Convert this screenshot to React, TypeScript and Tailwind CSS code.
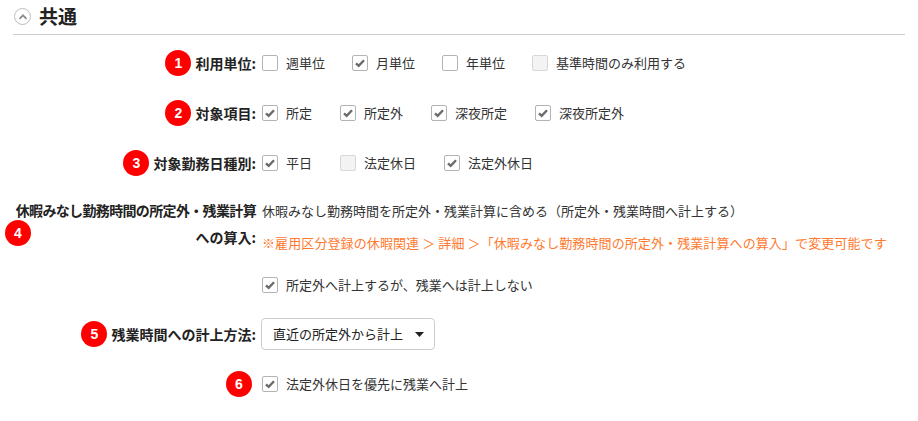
import React from "react";

const FONT = { fontFamily: '"Noto Sans CJK JP", "Noto Sans", sans-serif' };

function Badge({ n, className = "" }: { n: number; className?: string }) {
  return (
    <span
      className={`flex h-[26px] w-[26px] shrink-0 items-center justify-center rounded-full bg-[#f00] text-[14px] font-bold leading-none text-white ${className}`}
      style={{ fontFamily: '"Liberation Sans", Arial, sans-serif' }}
    >
      {n}
    </span>
  );
}

function Check({ checked, disabled }: { checked?: boolean; disabled?: boolean }) {
  return (
    <span
      className={`flex h-[16px] w-[16px] shrink-0 items-center justify-center rounded-[2px] border ${
        disabled ? "border-[#d8d8d8] bg-[#f3f3f3]" : "border-[#b3b3b3] bg-white"
      }`}
    >
      {checked && (
        <svg width="12" height="12" viewBox="0 0 12 12">
          <path d="M2 6.3 L4.7 8.9 L10 3.2" fill="none" stroke="#6b6b6b" strokeWidth="2.4" />
        </svg>
      )}
    </span>
  );
}

function Item({ label, checked, disabled }: { label: string; checked?: boolean; disabled?: boolean }) {
  return (
    <label className="flex items-center gap-[8px]">
      <Check checked={checked} disabled={disabled} />
      <span>{label}</span>
    </label>
  );
}

function Label({ n, text }: { n: number; text: string }) {
  return (
    <div className="flex items-center justify-end gap-[4px]">
      <Badge n={n} />
      <span className="text-[14px] font-bold text-[#222]">{text}</span>
    </div>
  );
}

export default function App() {
  return (
    <div className="w-[918px] h-[421px] bg-white text-[13px] text-[#333]" style={FONT}>
      <div className="mx-[13px] flex h-[35px] items-center gap-[8px] border-b border-[#cfcfcf] pl-[1px] pb-[1px]">
        <span className="flex h-[17px] w-[17px] items-center justify-center rounded-full border border-[#bdbdbd]">
          <svg width="10" height="10" viewBox="0 0 10 10">
            <path d="M1.5 6.8 L5 3.3 L8.5 6.8" fill="none" stroke="#8a8a8a" strokeWidth="1.7" />
          </svg>
        </span>
        <span className="text-[19px] font-bold text-[#222]">共通</span>
      </div>

      <div className="mt-[3px] grid grid-cols-[256px_1fr] items-center">
        <div className="h-[50px] flex items-center justify-end">
          <Label n={1} text="利用単位:" />
        </div>
        <div className="flex items-center gap-[27px] pl-[6px]">
          <Item label="週単位" />
          <Item label="月単位" checked />
          <Item label="年単位" />
          <Item label="基準時間のみ利用する" disabled />
        </div>

        <div className="h-[50px] flex items-center justify-end">
          <Label n={2} text="対象項目:" />
        </div>
        <div className="flex items-center gap-[28px] pl-[6px]">
          <Item label="所定" checked />
          <Item label="所定外" checked />
          <Item label="深夜所定" checked />
          <Item label="深夜所定外" checked />
        </div>

        <div className="h-[50px] flex items-center justify-end">
          <Label n={3} text="対象勤務日種別:" />
        </div>
        <div className="flex items-center gap-[28px] pl-[6px]">
          <Item label="平日" checked />
          <Item label="法定休日" disabled />
          <Item label="法定外休日" checked />
        </div>
      </div>

      <div className="grid grid-cols-[256px_1fr] pt-[9px]">
        <div className="relative text-right text-[14px] font-bold leading-[27px] text-[#222]">
          <Badge n={4} className="absolute left-[5px] top-[23px]" />
          <div className="whitespace-nowrap tracking-[-0.65px]">休暇みなし勤務時間の所定外・残業計算</div>
          <div>への算入:</div>
        </div>
        <div className="pl-[6px] pt-[4px] leading-5">
          <div>休暇みなし勤務時間を所定外・残業計算に含める（所定外・残業時間へ計上する）</div>
          <div className="mt-[12px] whitespace-nowrap tracking-[0.1px] text-[#ff7a2f]">
            ※雇用区分登録の休暇関連 ＞ 詳細 ＞「休暇みなし勤務時間の所定外・残業計算への算入」で変更可能です
          </div>
          <div className="mt-[22px] h-5 flex items-center">
            <Item label="所定外へ計上するが、残業へは計上しない" checked />
          </div>
        </div>
      </div>

      <div className="mt-[14px] grid grid-cols-[256px_1fr] items-center">
        <div className="h-[50px] flex items-center justify-end">
          <Label n={5} text="残業時間への計上方法:" />
        </div>
        <div className="pl-[5px]">
          <div className="flex h-[32px] w-[174px] items-center justify-between rounded-[4px] border border-[#cccccc] pl-[11px] pr-[10px] text-[#222]">
            <span>直近の所定外から計上</span>
            <svg width="9" height="5" viewBox="0 0 9 5">
              <path d="M0 0 H9 L4.5 5 Z" fill="#222" />
            </svg>
          </div>
        </div>

        <div className="h-[50px] flex items-center justify-end pr-[4px]">
          <Badge n={6} />
        </div>
        <div className="flex items-center pl-[6px]">
          <Item label="法定外休日を優先に残業へ計上" checked />
        </div>
      </div>
    </div>
  );
}
